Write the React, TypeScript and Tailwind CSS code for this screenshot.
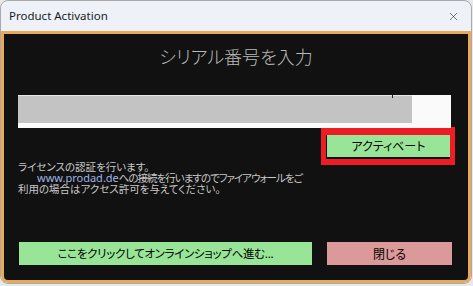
import { X } from 'lucide-react'

const jp = "font-['Noto_Sans_CJK_JP',sans-serif] [font-feature-settings:'palt']"

export default function App() {
  return (
    <div className="w-[473px] h-[286px] bg-[#e9e9e9] overflow-hidden">
      <div className="w-[472px] h-[284px] flex flex-col rounded-[8px] border border-[#a9a9a9] bg-[#eef2f8] overflow-hidden">
        {/* Title bar */}
        <div className="h-[30px] shrink-0 flex items-center justify-between pl-[8px] pr-[11px]">
          <span className="text-[11.5px] text-[#1b1b1b] font-['Noto_Sans',sans-serif]">Product Activation</span>
          <X size={13} strokeWidth={1.1} className="text-[#222]" />
        </div>

        {/* Body */}
        <div className={`flex-1 flex flex-col bg-[#111111] border-[3px] border-[#e9aa58] rounded-b-[7px] ${jp}`}>
          <h1 className="pt-[13px] text-center text-[18px] leading-[19px] font-light text-[#b9b9b9]">
            シリアル番号を入力
          </h1>

          {/* Serial input */}
          <div className="ml-[14px] mt-[29px] w-[433px] h-[33px] bg-[#fafafa] relative">
            <div className="w-[394px] h-[28px] bg-[#c3c3c3] border-t border-[#e6e6e6]" />
            <div className="absolute left-[374px] top-0 w-px h-[3px] bg-[#222]" />
          </div>

          {/* Activate */}
          <div className="ml-[317px] -mt-px w-[134px] bg-[#ee1c24] pt-[5px] pl-[5px] pr-[5px] pb-[6px]">
            <button className="w-full h-[24px] bg-[#98e598] border-l border-b-2 border-[#111] text-[12px] text-black leading-none">
              アクティベート
            </button>
          </div>

          {/* Info */}
          <div className="-mt-[4px] pl-[14px] text-[10.5px] leading-[11px] text-[#c8c8c8]">
            <p>ライセンスの認証を行います。</p>
            <p className="pl-[19px]">
              <span className="text-[11px] text-[#9fb3e6] font-['Noto_Sans',sans-serif]">www.prodad.de</span>
              <span className="tracking-[-1px]">への接続を行いますのでファイアウォールをご</span>
            </p>
            <p>利用の場合はアクセス許可を与えてください。</p>
          </div>

          {/* Bottom buttons */}
          <div className="mt-auto mb-[15px] ml-[15px] flex gap-[15px]">
            <button className="w-[293px] h-[23px] bg-[#98e598] text-[11.5px] tracking-[-0.3px] text-black leading-none">
              ここをクリックしてオンラインショップへ進む...
            </button>
            <button className="w-[125px] h-[23px] bg-[#dc9999] text-[12px] text-black leading-none">
              閉じる
            </button>
          </div>
        </div>
      </div>
    </div>
  )
}
